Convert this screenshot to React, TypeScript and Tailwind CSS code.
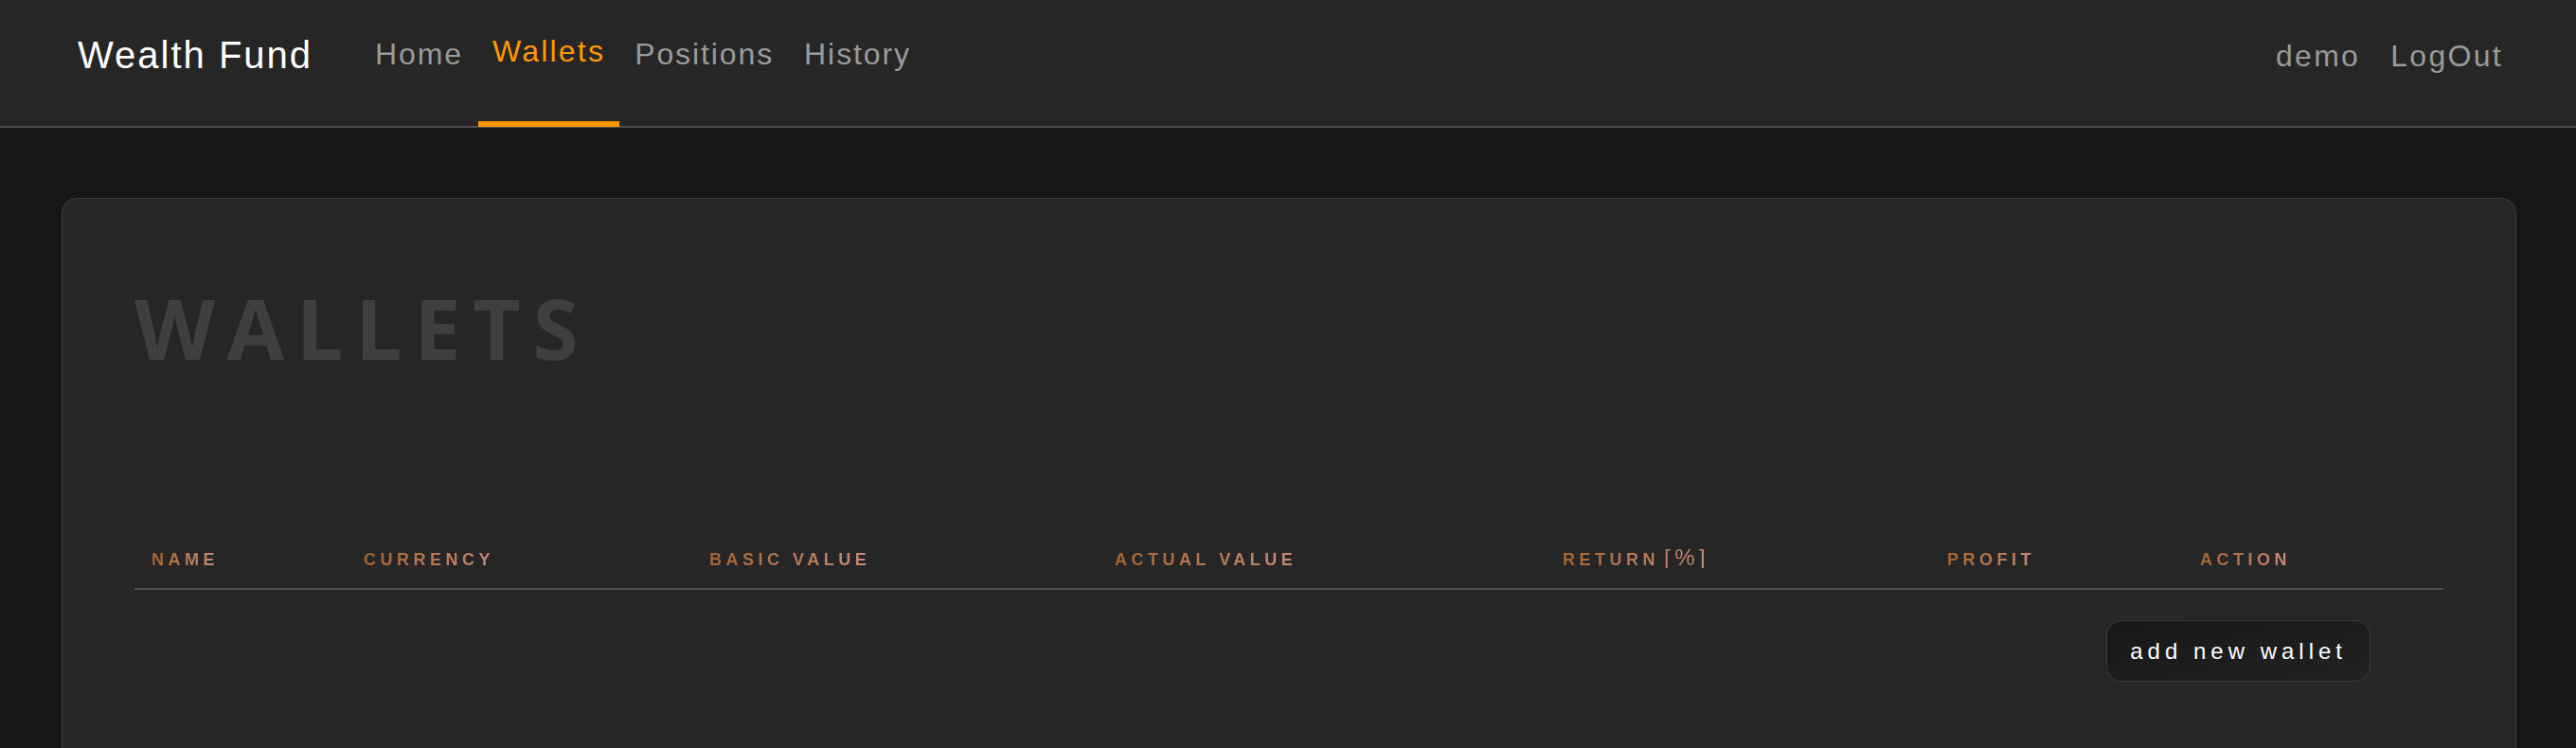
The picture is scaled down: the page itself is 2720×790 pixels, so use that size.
import React from 'react'

const navLinks = [
  { label: 'Home', active: false },
  { label: 'Wallets', active: true },
  { label: 'Positions', active: false },
  { label: 'History', active: false },
]

const columns = [
  { label: 'NAME', width: 'w-[224px]' },
  { label: 'CURRENCY', width: 'w-[365px]' },
  { label: 'BASIC VALUE', width: 'w-[428px]' },
  { label: 'ACTUAL VALUE', width: 'w-[473px]' },
  { label: 'RETURN', width: 'w-[406px]', suffix: '[%]' },
  { label: 'PROFIT', width: 'w-[267px]' },
  { label: 'ACTION', width: 'w-[275px]' },
]

function Navbar() {
  return (
    <nav className="flex h-[135px] border-b-2 border-[#4a4a4a] bg-[#262626] pl-[82px] pr-[61px] font-['Liberation_Sans',Arial,sans-serif]">
      <div className="pt-[38px] text-[40px] leading-[40px] tracking-[2px] text-white">Wealth Fund</div>
      <div className="ml-[50px] flex">
        {navLinks.map((link) => (
          <a
            key={link.label}
            href="#"
            className={
              link.active
                ? 'relative px-[15px] pt-[38px] text-[32px] leading-[32px] tracking-[2.2px] text-[#ff9900]'
                : 'relative px-4 pt-[41px] text-[32px] leading-[32px] tracking-[1.9px] text-[#9a9a9a]'
            }
          >
            {link.label}
            {link.active && (
              <span className="absolute -bottom-[1px] left-0 right-0 h-[6px] bg-[#ff9800]" />
            )}
          </a>
        ))}
      </div>
      <div className="ml-auto flex tracking-[2.3px]">
        <a href="#" className="px-4 pt-[43px] text-[32px] leading-[32px] text-[#9a9a9a]">demo</a>
        <a href="#" className="px-4 pt-[43px] text-[32px] leading-[32px] text-[#9a9a9a]">LogOut</a>
      </div>
    </nav>
  )
}

function WalletsTable() {
  return (
    <div className="mt-[190px]">
      <div className="flex border-b-2 border-[#505050] pb-[17px]">
        {columns.map((col) => (
          <div key={col.label} className={`${col.width} pl-[18px]`}>
            <span className="inline-block bg-linear-to-r from-[#a5642d] to-[#c68c74] bg-clip-text text-[18px] font-bold leading-[18px] tracking-[4.5px] text-transparent">
              {col.label}
              {col.suffix && (
                <span className="ml-[5px] text-[24px] font-normal">{col.suffix}</span>
              )}
            </span>
          </div>
        ))}
      </div>
      <div className="flex justify-end pr-[77px] pt-[32px]">
        <button className="h-[65px] rounded-[16px] border border-[#3a3a3a] bg-linear-to-br from-[#171717] to-[#222222] px-6 text-[24px] leading-[24px] tracking-[5px] text-white">
          add new wallet
        </button>
      </div>
    </div>
  )
}

export default function App() {
  return (
    <div className="min-h-[790px] bg-[#161616] font-['Liberation_Sans',Arial,sans-serif]">
      <Navbar />
      <main className="pl-[65px] pr-[63px] pt-[74px]">
        <section className="h-[700px] rounded-[16px] border border-[#3c3c3c] bg-[#262626] px-[76px] pt-[92px]">
          <h1 className="font-['Open_Sans',sans-serif] text-[88px] font-bold leading-[88px] tracking-[12.5px] text-[#3f3f3e]">
            WALLETS
          </h1>
          <WalletsTable />
        </section>
      </main>
    </div>
  )
}
